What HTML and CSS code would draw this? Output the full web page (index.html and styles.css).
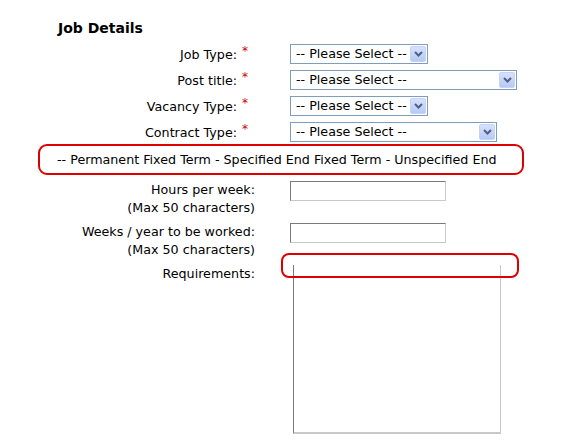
FILE: index.html
```html
<!DOCTYPE html>
<html>
<head>
<meta charset="utf-8">
<link rel="stylesheet" href="styles.css">
</head>
<body>
<div class="form">
  <h2 class="title">Job Details</h2>

  <div class="row sel-row">
    <div class="label">Job Type:<span class="req">*</span></div>
    <div class="field">
      <div class="select w-short"><span class="sel-text">-- Please Select --</span><span class="arrow"><svg width="9" height="6" viewBox="0 0 9 6"><path d="M1 1 L4.5 4.5 L8 1" fill="none" stroke="#4d6185" stroke-width="2"/></svg></span></div>
    </div>
  </div>

  <div class="row sel-row">
    <div class="label">Post title:<span class="req">*</span></div>
    <div class="field">
      <div class="select w-long"><span class="sel-text">-- Please Select --</span><span class="arrow"><svg width="9" height="6" viewBox="0 0 9 6"><path d="M1 1 L4.5 4.5 L8 1" fill="none" stroke="#4d6185" stroke-width="2"/></svg></span></div>
    </div>
  </div>

  <div class="row sel-row">
    <div class="label">Vacancy Type:<span class="req">*</span></div>
    <div class="field">
      <div class="select w-short"><span class="sel-text">-- Please Select --</span><span class="arrow"><svg width="9" height="6" viewBox="0 0 9 6"><path d="M1 1 L4.5 4.5 L8 1" fill="none" stroke="#4d6185" stroke-width="2"/></svg></span></div>
    </div>
  </div>

  <div class="row sel-row">
    <div class="label">Contract Type:<span class="req">*</span></div>
    <div class="field">
      <div class="select w-mid"><span class="sel-text">-- Please Select --</span><span class="arrow"><svg width="9" height="6" viewBox="0 0 9 6"><path d="M1 1 L4.5 4.5 L8 1" fill="none" stroke="#4d6185" stroke-width="2"/></svg></span></div>
    </div>
  </div>

  <div class="note">-- Permanent Fixed Term - Specified End Fixed Term - Unspecified End</div>

  <div class="row text-row">
    <div class="label">Hours per week:<br>(Max 50 characters)</div>
    <div class="field"><div class="input"></div></div>
  </div>

  <div class="row text-row">
    <div class="label">Weeks / year to be worked:<br>(Max 50 characters)</div>
    <div class="field"><div class="input"></div></div>
  </div>

  <div class="row text-row">
    <div class="label">Requirements:</div>
    <div class="field"><div class="textarea"></div></div>
  </div>

  <div class="highlight"></div>
</div>
</body>
</html>
```

FILE: styles.css
```css
html, body {
  margin: 0;
  padding: 0;
  background: #ffffff;
}

body {
  font-family: "DejaVu Sans", Verdana, sans-serif;
  font-size: 12.7px;
  color: #000000;
}

.form {
  position: relative;
  padding-top: 19px;
}

.title {
  margin: 0 0 7px 58px;
  font-size: 14px;
  font-weight: bold;
  line-height: 18px;
}

.row {
  display: grid;
  grid-template-columns: 255px 1fr;
  column-gap: 35px;
}

.sel-row {
  align-items: center;
  height: 20px;
  margin-bottom: 6px;
}

.text-row {
  align-items: start;
  line-height: 18px;
  margin-bottom: 6px;
}

.label {
  text-align: right;
  white-space: nowrap;
}

.req {
  color: #cc0000;
  font-size: 12px;
  vertical-align: 4px;
  line-height: 0;
  margin-left: 5px;
  margin-right: 7px;
}

.select {
  box-sizing: border-box;
  height: 20px;
  border: 1px solid #7f9db9;
  display: flex;
  align-items: center;
  justify-content: space-between;
  padding-left: 5px;
  padding-right: 1px;
  background: #ffffff;
}

.w-short { width: 138px; }
.w-long { width: 227px; }
.w-mid { width: 207px; }

.sel-text {
  white-space: nowrap;
  line-height: 16px;
}

.arrow {
  box-sizing: border-box;
  width: 16px;
  height: 16px;
  border: 1px solid #c3d3fd;
  border-radius: 2px;
  background: linear-gradient(#d6e1fb, #b7c9f3);
  display: flex;
  align-items: center;
  justify-content: center;
}

.note {
  box-sizing: border-box;
  margin: -4px 0 6px 38px;
  width: 486px;
  height: 31px;
  border: 2px solid #dd0000;
  border-radius: 9px;
  padding-left: 17px;
  display: flex;
  align-items: center;
  white-space: nowrap;
}

.input {
  box-sizing: border-box;
  width: 156px;
  height: 20px;
  border-top: 1px solid #7a7a7a;
  border-left: 1px solid #7a7a7a;
  border-right: 1px solid #c8c8c8;
  border-bottom: 1px solid #c8c8c8;
}

.textarea {
  box-sizing: border-box;
  margin-left: 3px;
  width: 208px;
  height: 169px;
  border-left: 1px solid #7a7a7a;
  border-right: 1px solid #c8c8c8;
  border-bottom: 2px solid #c8c8c8;
}

.highlight {
  position: absolute;
  left: 281px;
  top: 253px;
  width: 238px;
  height: 25px;
  box-sizing: border-box;
  border: 2px solid #dd0000;
  border-radius: 8px;
}
```
